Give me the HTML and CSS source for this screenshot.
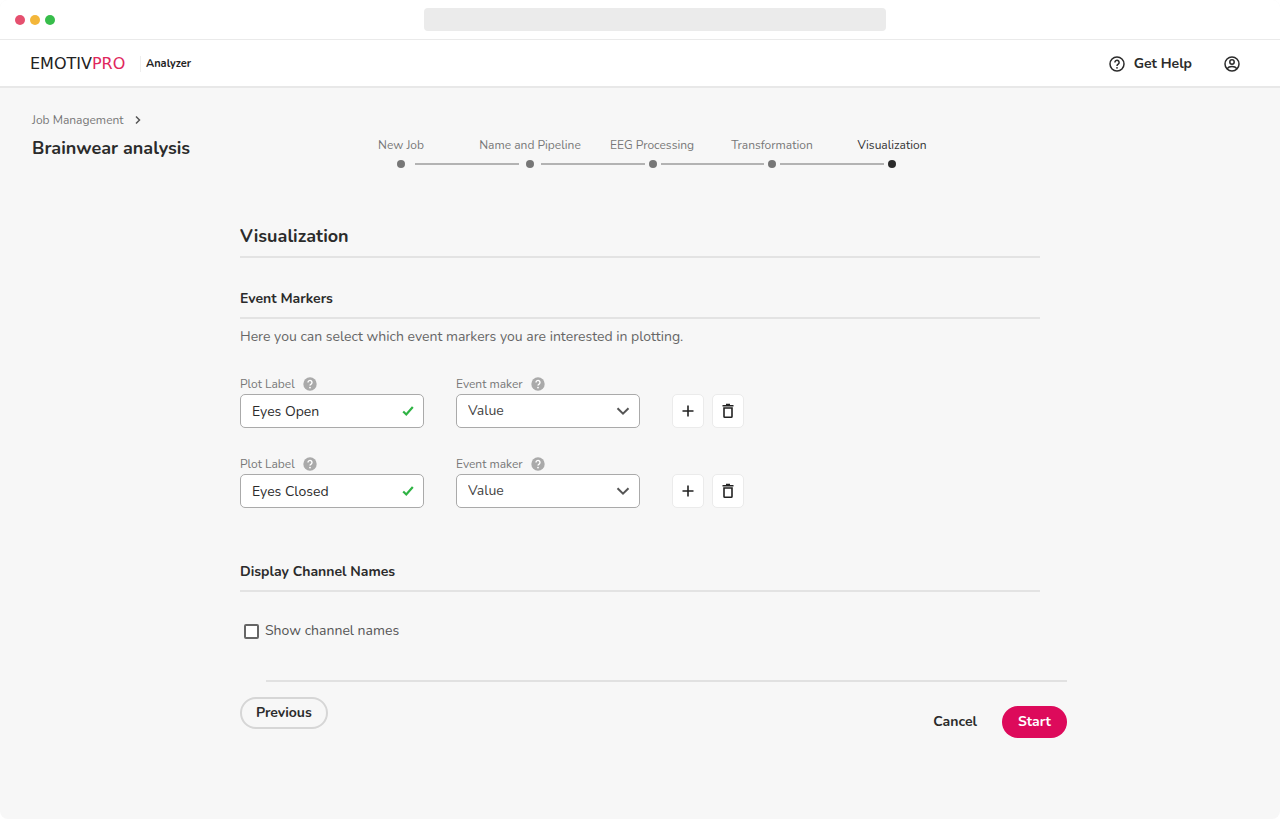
FILE: index.html
```html
<!DOCTYPE html>
<html lang="en">
<head>
<meta charset="utf-8">
<meta name="viewport" content="width=device-width, initial-scale=1">
<title>EmotivPRO Analyzer</title>
<link rel="stylesheet" href="styles.css">
</head>
<body>
<svg class="sprite" aria-hidden="true">
  <symbol id="help" viewBox="0 0 14 14"><circle cx="7" cy="7" r="6.7" fill="#aaa"/><path d="M5 5.500a2 2 0 1 1 3.100 1.600C7.300 7.600 7 7.900 7 8.600" fill="none" stroke="#fff" stroke-width="1.400"/><circle cx="7" cy="10.600" r=".9" fill="#fff"/></symbol>
  <symbol id="check" viewBox="0 0 12 12"><path d="M1.200 6.500 4.300 9.500 10.800 2" fill="none" stroke="#2fb344" stroke-width="2.200"/></symbol>
  <symbol id="chevron" viewBox="0 0 14 14"><path d="m1.500 4.200 5.500 5.500 5.500-5.500" fill="none" stroke="#555" stroke-width="2"/></symbol>
  <symbol id="plus" viewBox="0 0 14 14"><path d="M7 1.500v11M1.500 7h11" stroke="#222" stroke-width="1.600"/></symbol>
  <symbol id="trash" viewBox="0 0 14 16"><path d="M1.500 2.700h11M5 1.500h4" fill="none" stroke="#222" stroke-width="1.600"/><path d="M3 5v8.500q0 .8.8.8h6.400q.8 0 .8-.8V5z" fill="none" stroke="#222" stroke-width="1.600"/></symbol>
</svg>
<div class="window">
  <div class="chrome">
    <div class="lights"><i class="light red"></i><i class="light amber"></i><i class="light green"></i></div>
    <div class="address"></div>
  </div>
  <header class="topbar">
    <a class="brand" href="#"><span class="logo">EMOTIV<span class="logo-pro">PRO</span></span><span class="product">Analyzer</span></a>
    <nav class="tools">
      <a class="get-help" href="#"><svg width="16" height="16" viewBox="0 0 16 16" fill="none" stroke="#2b2b2b" stroke-width="1.500" aria-hidden="true"><circle cx="8" cy="8" r="7"/><path d="M5.900 6.400a2.100 2.100 0 1 1 3.300 1.700C8.300 8.700 8 9 8 9.900"/><circle cx="8" cy="11.800" r=".9" fill="#2b2b2b" stroke="none"/></svg>Get Help</a>
      <button class="account" type="button" aria-label="Account"><svg width="16" height="16" viewBox="0 0 16 16" fill="none" stroke="#2b2b2b" stroke-width="1.500" aria-hidden="true"><circle cx="8" cy="8" r="7"/><circle cx="8" cy="6" r="2.200"/><path d="M3 12.700c1.200-1.500 3-2.200 5-2.200s3.800.7 5 2.200"/></svg></button>
    </nav>
  </header>
  <div class="page-head">
    <div class="titles">
      <a class="crumb" href="#">Job Management<svg width="10" height="10" viewBox="0 0 10 10" aria-hidden="true"><path d="m3 1.500 3.500 3.500L3 8.500" fill="none" stroke="#555" stroke-width="1.500"/></svg></a>
      <h1 class="title">Brainwear analysis</h1>
    </div>
    <div class="stepper">
      <ol class="steps"><li>New Job</li><li>Name and Pipeline</li><li>EEG Processing</li><li>Transformation</li><li class="current" aria-current="step">Visualization</li></ol>
      <div class="track"><i class="dot"></i><i class="line first"></i><i class="dot"></i><i class="line second"></i><i class="dot"></i><i class="line"></i><i class="dot"></i><i class="line"></i><i class="dot dark"></i></div>
    </div>
  </div>
  <main class="content">
    <form>
      <h2 class="section-title">Visualization</h2>
      <h3 class="sub-title">Event Markers</h3>
      <p class="hint">Here you can select which event markers you are interested in plotting.</p>
      <div class="markers">
        <div class="marker">
          <div class="field"><div class="label-row"><label for="plot1">Plot Label</label><svg width="14" height="14" aria-hidden="true"><use href="#help"/></svg></div>
            <div class="control"><input id="plot1" class="box" type="text" value="Eyes Open"><svg class="mark" width="12" height="12" aria-hidden="true"><use href="#check"/></svg></div></div>
          <div class="field"><div class="label-row"><label for="event1">Event maker</label><svg width="14" height="14" aria-hidden="true"><use href="#help"/></svg></div>
            <div class="control"><select id="event1" class="box"><option>Value</option></select><svg class="mark" width="14" height="14" aria-hidden="true"><use href="#chevron"/></svg></div></div>
          <div class="actions"><button type="button" class="square" aria-label="Add marker"><svg width="14" height="14"><use href="#plus"/></svg></button><button type="button" class="square" aria-label="Delete marker"><svg width="14" height="16"><use href="#trash"/></svg></button></div>
        </div>
        <div class="marker">
          <div class="field"><div class="label-row"><label for="plot2">Plot Label</label><svg width="14" height="14" aria-hidden="true"><use href="#help"/></svg></div>
            <div class="control"><input id="plot2" class="box" type="text" value="Eyes Closed"><svg class="mark" width="12" height="12" aria-hidden="true"><use href="#check"/></svg></div></div>
          <div class="field"><div class="label-row"><label for="event2">Event maker</label><svg width="14" height="14" aria-hidden="true"><use href="#help"/></svg></div>
            <div class="control"><select id="event2" class="box"><option>Value</option></select><svg class="mark" width="14" height="14" aria-hidden="true"><use href="#chevron"/></svg></div></div>
          <div class="actions"><button type="button" class="square" aria-label="Add marker"><svg width="14" height="14"><use href="#plus"/></svg></button><button type="button" class="square" aria-label="Delete marker"><svg width="14" height="16"><use href="#trash"/></svg></button></div>
        </div>
      </div>
      <h3 class="sub-title">Display Channel Names</h3>
      <div class="check-row"><input id="names" class="tick" type="checkbox"><label for="names">Show channel names</label></div>
      <div class="footer">
        <button type="button" class="pill previous">Previous</button>
        <div class="finish"><button type="button" class="cancel">Cancel</button><button type="submit" class="pill start">Start</button></div>
      </div>
    </form>
  </main>
</div>
</body>
</html>
```
FILE: styles.css
```css
*, *::before, *::after { box-sizing: border-box; }
body { margin: 0; background: #fff; color: #2b2b2b; font: 14px/20px Nunito, Lato, sans-serif; }
h1, h2, h3, p, ol { margin: 0; padding: 0; }
a { color: inherit; text-decoration: none; }
button, input, select { font: inherit; color: inherit; margin: 0; }
button { padding: 0; border: 0; background: none; cursor: pointer; }
svg { display: block; flex: none; }
.sprite { position: absolute; width: 0; height: 0; }
.window { min-height: calc(100vh - 1px); background: #f7f7f7; border-radius: 8px; overflow: hidden; }

.chrome { display: grid; grid-template-columns: 1fr 462px 1fr; align-items: center; height: 40px; padding-left: 30px; background: #fff; border-bottom: 1px solid #eaeaea; }
.lights { display: flex; gap: 5px; margin-left: -15px; }
.light { width: 10px; height: 10px; border-radius: 50%; }
.red { background: #e5506f; }
.amber { background: #f3b63a; }
.green { background: #37bd4b; }
.address { height: 23px; border-radius: 4px; background: #ebebeb; }

.topbar { display: flex; align-items: center; justify-content: space-between; height: 48px; padding: 1px 40px 0 30px; background: #fff; border-bottom: 2px solid #e8e8e8; }
.brand { display: flex; align-items: center; }
.logo { min-width: 110px; font: 16px/20px "DejaVu Sans", sans-serif; color: #222; }
.logo-pro { color: #e0265c; }
.product { padding-left: 5px; border-left: 1px solid #eee; font-size: 11px; line-height: 16px; font-weight: 700; color: #222; }
.tools { display: flex; align-items: center; gap: 32px; }
.get-help { display: flex; align-items: center; gap: 9px; font-weight: 700; }

.page-head { display: grid; grid-template-columns: 1fr auto 1fr; padding: 22px 32px 0; }
.crumb { display: flex; align-items: center; gap: 9px; font-size: 12px; color: #777; }
.title { margin-top: 6px; font-size: 18px; line-height: 24px; font-weight: 700; }
.stepper { padding: 25px 0 0 6px; }
.steps { display: grid; grid-template-columns: 130px 128px 116px 124px 116px; list-style: none; font-size: 12px; text-align: center; color: #777; }
.current { color: #333; }
.track { display: flex; align-items: center; margin: 5px 54px 0 61px; }
.dot { width: 8px; height: 8px; border-radius: 50%; background: #777; }
.dark { background: #2b2b2b; }
.line { flex: 1; height: 2px; margin: 0 4px; background: #b3b3b3; }
.first { margin: 0 7px 0 10px; }
.second { margin: 0 4px 0 7px; }

.content { max-width: 800px; margin: 0 auto; padding: 56px 0 40px; }
.section-title { padding-bottom: 8px; border-bottom: 2px solid #e3e3e3; font-size: 18px; line-height: 24px; font-weight: 700; }
.sub-title { margin-top: 31px; padding-bottom: 8px; border-bottom: 2px solid #e3e3e3; font-size: 14px; font-weight: 700; }
.hint { margin-top: 8px; color: #666; }
.markers { display: grid; gap: 26px; margin: 27px 0 54px; }
.marker { display: grid; grid-template-columns: 184px 184px auto; column-gap: 32px; justify-content: start; align-items: end; }
.label-row { display: flex; align-items: center; gap: 8px; height: 20px; font-size: 12px; color: #777; }
.control { position: relative; }
.box { display: block; width: 100%; height: 34px; padding: 0 11px; border: 1px solid #aaa; border-radius: 5px; background: #fff; appearance: none; }
select.box { color: #444; }
.mark { position: absolute; right: 10px; top: 50%; transform: translateY(-50%); pointer-events: none; }
.actions { display: flex; gap: 8px; }
.square { display: grid; place-items: center; width: 32px; height: 34px; border: 1px solid #ebebeb; border-radius: 5px; background: #fff; }
.check-row { display: flex; align-items: center; gap: 6px; margin-top: 29px; padding-left: 4px; color: #555; }
.tick { width: 15px; height: 15px; border: 2px solid #666; border-radius: 2px; background: #fff; appearance: none; }
.tick:checked { background: #666; }

.footer { display: flex; flex-wrap: wrap; justify-content: space-between; margin: 39px -27px 0 0; }
.footer::before { content: ""; flex: 0 0 100%; height: 2px; border-left: 26px solid #f7f7f7; background: #e1e1e1; }
.pill { height: 32px; padding: 0 16px; border-radius: 16px; font-weight: 700; }
.previous { margin-top: 15px; padding: 0 14px; border: 2px solid #d6d6d6; }
.finish { display: flex; align-items: center; gap: 25px; margin-top: 24px; }
.cancel { font-weight: 700; }
.start { background: #dd0a5b; color: #fff; }
```
